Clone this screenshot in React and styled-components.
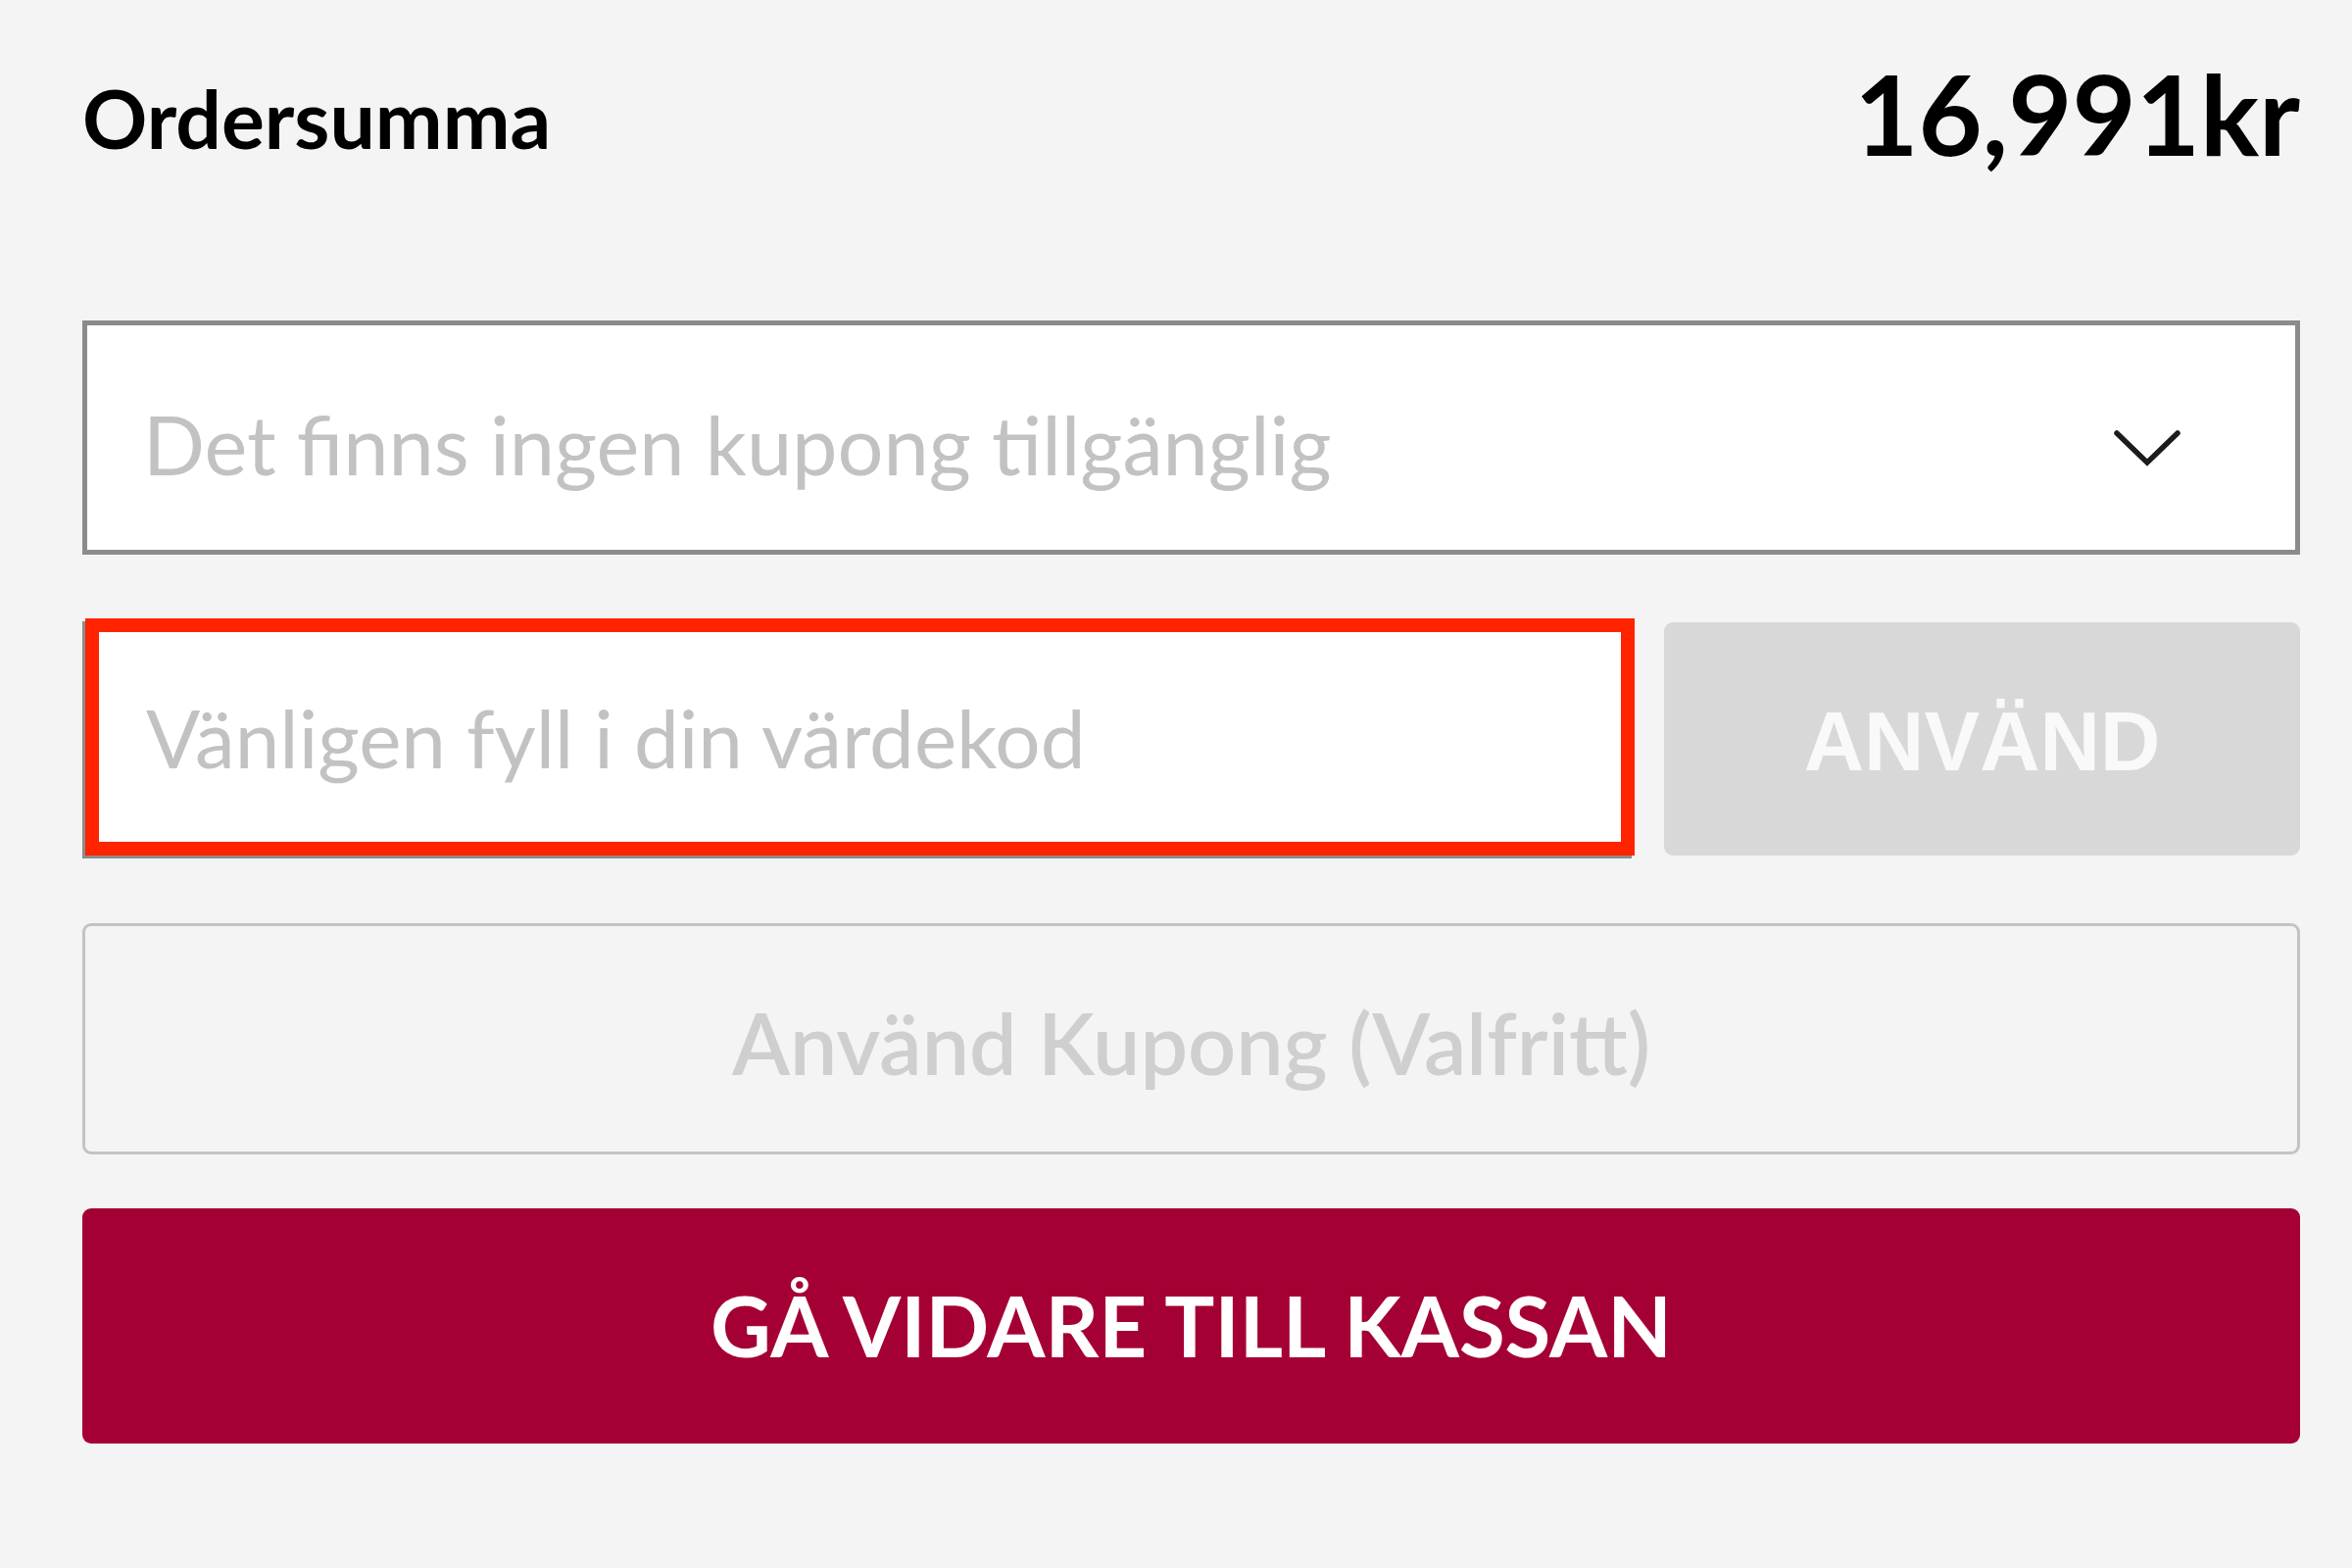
import React from "react";
import styled, { createGlobalStyle } from "styled-components";

const GlobalStyle = createGlobalStyle`
  html, body {
    margin: 0;
    padding: 0;
    background: #f4f4f4;
  }
  body {
    font-family: Lato, "Liberation Sans", sans-serif;
    color: #000;
  }
  * {
    box-sizing: border-box;
  }
`;

const Page = styled.main`
  min-height: 1600px;
  padding: 0 53px 0 84px;
  background: #f4f4f4;
`;

const Summary = styled.section`
  display: flex;
  flex-direction: column;
  width: 2263px;
`;

const TotalRow = styled.div`
  display: flex;
  justify-content: space-between;
  align-items: flex-start;
  height: 327px;
  padding-top: 60px;
`;

const TotalLabel = styled.h2`
  margin: 20px 0 0;
  font-size: 82.2px;
  font-weight: 700;
  line-height: 1;
`;

const TotalPrice = styled.strong`
  font-size: 112.5px;
  font-weight: 700;
  line-height: 1;
`;

const CouponSelect = styled.div`
  display: flex;
  align-items: center;
  justify-content: space-between;
  height: 239px;
  padding: 13px 117px 0 57px;
  background: #fff;
  border: 5px solid #8b8b8b;
  cursor: pointer;
`;

const SelectText = styled.span`
  font-size: 82.9px;
  font-weight: 400;
  line-height: 1;
  color: #c2c2c2;
`;

const ChevronWrap = styled.span`
  display: flex;
  margin-top: 8px;
`;

const CodeRow = styled.div`
  display: grid;
  grid-template-columns: 1fr 649px;
  gap: 30px;
  height: 242px;
  margin-top: 65px;
`;

const CodeInput = styled.input`
  width: calc(100% - 3px);
  height: 100%;
  margin-left: 3px;
  padding: 0 0 0 48px;
  border: 14px solid #ff2300;
  border-radius: 0;
  background: #fff;
  box-shadow: -3px 3px 0 #8b8b8b;
  font-family: Lato, "Liberation Sans", sans-serif;
  font-size: 81.8px;
  font-weight: 400;
  color: #333;
  outline: none;

  &::placeholder {
    color: #c2c2c2;
    opacity: 1;
  }
`;

const ApplyButton = styled.button`
  height: 238px;
  margin-top: 4px;
  border: 0;
  border-radius: 9px;
  background: #d8d8d8;
  color: #f9f9f9;
  font-family: "Liberation Sans", Arial, sans-serif;
  font-size: 85px;
  font-weight: 700;
  line-height: 1;
  padding: 4px 0 0;
`;

const CouponButton = styled.button`
  height: 236px;
  margin-top: 69px;
  padding: 9px 0 0;
  border: 3px solid #c3c3c3;
  border-radius: 9px;
  background: transparent;
  color: #cfcfcf;
  font-family: Lato, "Liberation Sans", sans-serif;
  font-size: 86.2px;
  font-weight: 600;
  line-height: 1;
`;

const CheckoutButton = styled.button`
  height: 240px;
  margin-top: 55px;
  padding: 0;
  border: 0;
  border-radius: 9px;
  background: #a50034;
  color: #fff;
  font-family: Lato, "Liberation Sans", sans-serif;
  font-size: 85.2px;
  font-weight: 700;
  line-height: 1;
`;

const Chevron = () => (
  <svg width="68" height="38" viewBox="0 0 68 38" fill="none">
    <polyline
      points="3,4 34,34 65,4"
      stroke="#1c1c1c"
      strokeWidth="5.5"
      strokeLinecap="round"
      strokeLinejoin="miter"
    />
  </svg>
);

export default function App() {
  return (
    <>
      <GlobalStyle />
      <Page>
        <Summary>
          <TotalRow>
            <TotalLabel>Ordersumma</TotalLabel>
            <TotalPrice>16,991kr</TotalPrice>
          </TotalRow>

          <CouponSelect>
            <SelectText>Det finns ingen kupong tillgänglig</SelectText>
            <ChevronWrap>
              <Chevron />
            </ChevronWrap>
          </CouponSelect>

          <CodeRow>
            <CodeInput placeholder="Vänligen fyll i din värdekod" />
            <ApplyButton disabled>ANVÄND</ApplyButton>
          </CodeRow>

          <CouponButton disabled>Använd Kupong (Valfritt)</CouponButton>

          <CheckoutButton>GÅ VIDARE TILL KASSAN</CheckoutButton>
        </Summary>
      </Page>
    </>
  );
}
